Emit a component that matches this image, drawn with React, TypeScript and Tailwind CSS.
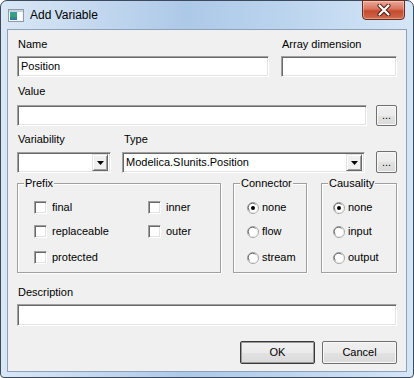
import React from "react";

const sunken =
  "bg-white border border-t-[#a0a0a0] border-l-[#a0a0a0] border-r-[#ffffff] border-b-[#ffffff] shadow-[inset_1px_1px_0_#696969,inset_-1px_-1px_0_#e3e3e3]";

function TextBox({ className = "", value = "" }: { className?: string; value?: string }) {
  return (
    <div className={`${sunken} flex items-center pl-[3px] ${className}`}>
      <span className="leading-[13px] text-black">{value}</span>
    </div>
  );
}

function Button({ label, className = "", def = false }: { label: string; className?: string; def?: boolean }) {
  return (
    <div
      className={`flex items-center justify-center rounded-[2px] border ${
        def ? "border-[#3a3a3a] shadow-[inset_0_0_0_1px_#9a9a9a]" : "border-[#707070] shadow-[inset_0_0_0_1px_#f8f8f8]"
      } bg-[linear-gradient(#f0f0f0_0%,#ebebeb_50%,#e2e2e2_51%,#dadada_100%)] ${className}`}
    >
      <span className="leading-[13px] text-black">{label}</span>
    </div>
  );
}

function Combo({ className = "", value = "" }: { className?: string; value?: string }) {
  return (
    <div className={`${sunken} flex items-center pl-[3px] pr-[2px] ${className}`}>
      <span className="flex-1 leading-[13px] text-black">{value}</span>
      <div className="flex h-[17px] w-[16px] items-center justify-center border border-t-[#e3e3e3] border-l-[#e3e3e3] border-r-[#696969] border-b-[#696969] bg-[#f0f0f0] shadow-[inset_1px_1px_0_#ffffff,inset_-1px_-1px_0_#a0a0a0]">
        <svg width="7" height="4" viewBox="0 0 7 4">
          <path d="M0 0H7L3.5 4Z" fill="#000" />
        </svg>
      </div>
    </div>
  );
}

function Check({ label }: { label: string }) {
  return (
    <div className="flex h-[13px] items-center gap-[5px]">
      <div className="h-[13px] w-[13px] border border-t-[#a0a0a0] border-l-[#a0a0a0] border-r-[#ffffff] border-b-[#ffffff] bg-white shadow-[inset_1px_1px_0_#696969,inset_-1px_-1px_0_#e3e3e3]" />
      <span className="leading-[13px] text-black">{label}</span>
    </div>
  );
}

function Radio({ label, checked = false }: { label: string; checked?: boolean }) {
  return (
    <div className="flex h-[13px] items-center gap-[3px]">
      <svg width="12" height="12" viewBox="0 0 12 12">
        <circle cx="6" cy="6" r="5.5" fill="#ffffff" stroke="#a0a0a0" />
        <path d="M2.5 8.5A4.2 4.2 0 0 1 8.5 2.5" fill="none" stroke="#696969" strokeWidth="1" />
        <path d="M9.5 3.5A4.2 4.2 0 0 1 3.5 9.5" fill="none" stroke="#e3e3e3" strokeWidth="1" />
        {checked && <circle cx="6" cy="6" r="2" fill="#000" />}
      </svg>
      <span className="leading-[13px] text-black">{label}</span>
    </div>
  );
}

function Group({ title, className = "", children }: { title: string; className?: string; children?: React.ReactNode }) {
  return (
    <div className={`relative h-[90px] border border-[#a0a0a0] shadow-[1px_1px_0_#ffffff,inset_1px_1px_0_#ffffff] ${className}`}>
      <span className="absolute left-[6px] top-[-7px] bg-[#f0f0f0] px-[1px] leading-[13px] text-black">{title}</span>
      {children}
    </div>
  );
}

export default function App() {
  return (
    <div className="h-[378px] w-[414px] bg-white font-['Liberation_Sans',Arial,sans-serif] text-[11px]">
      <div className="flex h-full flex-col rounded-t-[7px] rounded-b-[4px] border border-[#3c4a5c] bg-[linear-gradient(90deg,#d9e7f6_0%,#c6daf0_20%,#adc9e8_45%,#bcd5ee_70%,#d5e6f7_100%)]">
        {/* Title bar */}
        <div className="flex h-[28px] items-start">
          <div className="flex h-full items-center pl-[7px]">
            <svg width="16" height="13" viewBox="0 0 16 13">
              <rect x="0.5" y="0.5" width="15" height="12" fill="#f4f6f8" stroke="#8e9aa8" />
              <rect x="1" y="1" width="14" height="2" fill="#c8d3de" />
              <defs>
                <linearGradient id="g1" x1="0" y1="0" x2="0" y2="1">
                  <stop offset="0" stopColor="#2f9fb0" />
                  <stop offset="0.5" stopColor="#3aa26c" />
                  <stop offset="1" stopColor="#2c6fb4" />
                </linearGradient>
              </defs>
              <rect x="2" y="3" width="7" height="8" fill="url(#g1)" />
              <rect x="10" y="3" width="4" height="8" fill="#ffffff" />
            </svg>
            <span className="ml-[6px] font-['Liberation_Sans',Arial,sans-serif] text-[12px] leading-[15px] text-black">
              Add Variable
            </span>
          </div>
          <div className="flex-1" />
          <div className="mr-[8px] -mt-[1px] flex h-[20px] w-[43px] items-center justify-center rounded-b-[4px] border border-[#6b2a1c] bg-[linear-gradient(#e9a898_0%,#d8735e_45%,#c44a2e_55%,#d06a4c_100%)] shadow-[inset_0_0_0_1px_rgba(255,255,255,0.35)]">
            <svg width="14" height="12" viewBox="0 0 14 12">
              <path d="M2.5 1.5L11.5 10.5M11.5 1.5L2.5 10.5" stroke="#4a1a10" strokeWidth="4" strokeLinecap="round" />
              <path d="M2.5 1.5L11.5 10.5M11.5 1.5L2.5 10.5" stroke="#ffffff" strokeWidth="2.2" strokeLinecap="round" />
            </svg>
          </div>
        </div>
        {/* Body */}
        <div className="flex flex-1 flex-col px-[6px] pb-[5px]">
          <div className="flex flex-1 flex-col border border-[#8da2ba] bg-[#f0f0f0] px-[9px] pt-[8px]">
            {/* Name / Array dimension */}
            <div className="flex gap-[12px]">
              <div className="flex w-[252px] flex-col">
                <span className="pl-[1px] leading-[13px] text-black">Name</span>
                <TextBox className="mt-[5px] h-[21px]" value="Position" />
              </div>
              <div className="flex w-[116px] flex-col">
                <span className="pl-[1px] leading-[13px] text-black">Array dimension</span>
                <TextBox className="mt-[5px] h-[21px]" />
              </div>
            </div>
            {/* Value */}
            <span className="mt-[8px] pl-[1px] leading-[13px] text-black">Value</span>
            <div className="mt-[7px] flex items-center gap-[9px]">
              <TextBox className="h-[21px] w-[351px]" />
              <Button label="..." className="h-[21px] w-[21px]" />
            </div>
            {/* Variability / Type */}
            <div className="mt-[7px] flex gap-[11px]">
              <div className="flex w-[94px] flex-col">
                <span className="pl-[1px] leading-[13px] text-black">Variability</span>
                <Combo className="mt-[6px] h-[21px]" />
              </div>
              <div className="flex w-[243px] flex-col">
                <span className="pl-[2px] leading-[13px] text-black">Type</span>
                <Combo className="mt-[6px] h-[21px]" value="Modelica.SIunits.Position" />
              </div>
              <div className="flex flex-col justify-end">
                <Button label="..." className="h-[22px] w-[21px]" />
              </div>
            </div>
            {/* Groups */}
            <div className="mt-[10px] flex">
              <Group title="Prefix" className="w-[204px]">
                <div className="flex pl-[16px] pt-[17px]">
                  <div className="flex w-[114px] flex-col gap-[11px]">
                    <Check label="final" />
                    <Check label="replaceable" />
                    <div className="mt-[2px]">
                      <Check label="protected" />
                    </div>
                  </div>
                  <div className="flex flex-col gap-[11px]">
                    <Check label="inner" />
                    <Check label="outer" />
                  </div>
                </div>
              </Group>
              <Group title="Connector" className="ml-[12px] w-[74px]">
                <div className="flex flex-col gap-[11px] pl-[13px] pt-[17px]">
                  <Radio label="none" checked />
                  <Radio label="flow" />
                  <div className="mt-[2px]">
                    <Radio label="stream" />
                  </div>
                </div>
              </Group>
              <Group title="Causality" className="ml-[14px] w-[76px]">
                <div className="flex flex-col gap-[11px] pl-[11px] pt-[17px]">
                  <Radio label="none" checked />
                  <Radio label="input" />
                  <div className="mt-[2px]">
                    <Radio label="output" />
                  </div>
                </div>
              </Group>
            </div>
            {/* Description */}
            <span className="mt-[13px] pl-[1px] leading-[13px] text-black">Description</span>
            <TextBox className="mt-[5px] h-[22px]" />
            {/* Buttons */}
            <div className="mt-[15px] flex justify-end gap-[7px]">
              <Button label="OK" def className="h-[23px] w-[75px]" />
              <Button label="Cancel" className="h-[23px] w-[75px]" />
            </div>
          </div>
        </div>
      </div>
    </div>
  );
}
